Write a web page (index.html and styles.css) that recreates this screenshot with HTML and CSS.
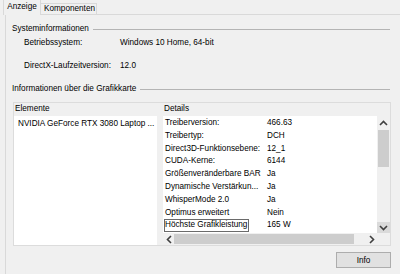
FILE: index.html
```html
<!DOCTYPE html>
<html>
<head>
    <meta name="viewport" content="width=device-width, initial-scale=1.0">
    <title>DirectX-Diagnoseprogramm - Anzeige</title>
    <link rel="stylesheet" href="styles.css">
</head>
<body>
    <!-- Tab strip -->
    <div class="tabs">
        <div class="tab active">Anzeige</div>
        <div class="tab">Komponenten</div>
    </div>

    <div class="page">
        <div class="section-title"><span>Systeminformationen</span><div class="rule"></div></div>

        <div class="info-row">
            <span class="key">Betriebssystem:</span>
            <span>Windows 10 Home, 64-bit</span>
        </div>
        <div class="info-row gap">
            <span class="key">DirectX-Laufzeitversion:</span>
            <span>12.0</span>
        </div>

        <div class="section-title gap"><span>Informationen über die Grafikkarte</span><div class="rule"></div></div>

        <!-- Elemente / Details -->
        <div class="frame">
            <div class="frame-head">
                <span class="head-el">Elemente</span>
                <span>Details</span>
            </div>
            <div class="frame-body">
                <div class="list">
                    <div class="list-item">NVIDIA GeForce RTX 3080 Laptop ...</div>
                </div>

                <div class="details">
                    <div class="details-main">
                        <div class="rows">
                            <div class="row"><span class="label">Treiberversion:</span><span>466.63</span></div>
                            <div class="row"><span class="label">Treibertyp:</span><span>DCH</span></div>
                            <div class="row"><span class="label">Direct3D-Funktionsebene:</span><span>12_1</span></div>
                            <div class="row"><span class="label">CUDA-Kerne:</span><span>6144</span></div>
                            <div class="row"><span class="label">Größenveränderbare BAR</span><span>Ja</span></div>
                            <div class="row"><span class="label">Dynamische Verstärkun...</span><span>Ja</span></div>
                            <div class="row"><span class="label">WhisperMode 2.0</span><span>Ja</span></div>
                            <div class="row"><span class="label">Optimus erweitert</span><span>Nein</span></div>
                            <div class="row"><span class="label focused"><span class="focus">Höchste Grafikleistung</span></span><span>165 W</span></div>
                        </div>
                        <div class="vscroll">
                            <div class="arrow">
                                <svg width="9" height="6" viewBox="0 0 9 6"><path d="M1 5 L4.5 1.5 L8 5" fill="none" stroke="#404040" stroke-width="1.6"/></svg>
                            </div>
                            <div class="vthumb"></div>
                            <div class="vtrack"></div>
                            <div class="arrow hot">
                                <svg width="9" height="6" viewBox="0 0 9 6"><path d="M1 1 L4.5 4.5 L8 1" fill="none" stroke="#404040" stroke-width="1.6"/></svg>
                            </div>
                        </div>
                    </div>
                    <div class="hscroll-row">
                        <div class="hscroll">
                            <div class="harrow">
                                <svg width="6" height="9" viewBox="0 0 6 9"><path d="M5 1 L1.5 4.5 L5 8" fill="none" stroke="#404040" stroke-width="1.6"/></svg>
                            </div>
                            <div class="hthumb"></div>
                            <div class="htrack"></div>
                            <div class="harrow">
                                <svg width="6" height="9" viewBox="0 0 6 9"><path d="M1 1 L4.5 4.5 L1 8" fill="none" stroke="#404040" stroke-width="1.6"/></svg>
                            </div>
                        </div>
                        <div class="corner"></div>
                    </div>
                </div>
            </div>
        </div>

        <div class="actions">
            <button class="btn">Info</button>
        </div>
    </div>
</body>
</html>
```

FILE: styles.css
```css
body {
    margin: 0;
    background-color: #f0f0f0;
    font-family: "Liberation Sans", Arial, sans-serif;
    font-size: 8.2px;
    color: #000;
    overflow: hidden;
}

/* Tabs */
.tabs {
    display: flex;
    align-items: flex-end;
    height: 14px;
    padding-left: 3px;
}

.tab {
    height: 10px;
    line-height: 10px;
    padding: 0 3px;
    width: 49px;
    border: 1px solid #d9d9d9;
    border-bottom: none;
    background-color: #f0f0f0;
    text-align: center;
}

.tab.active {
    position: relative;
    z-index: 1;
    width: 36px;
    padding: 0;
    height: 15px;
    line-height: 14px;
    margin-bottom: -1px;
    margin-right: -1px;
}

/* Tab page */
.page {
    margin-left: 5px;
    border-top: 1px solid #d9d9d9;
    border-left: 1px solid #d9d9d9;
    padding: 9px 0 0 6px;
    height: 250px;
}

.section-title {
    display: flex;
    align-items: center;
    height: 10px;
    line-height: 10px;
    width: 378px;
}

.section-title.gap {
    margin-top: 13px;
}

.rule {
    flex: 1;
    margin-left: 4px;
    border-top: 1px solid #b4b4b4;
}

.info-row {
    display: flex;
    height: 10px;
    line-height: 10px;
    margin-top: 4px;
    padding-left: 12px;
}

.info-row.gap {
    margin-top: 13px;
}

.key {
    width: 96px;
}

/* Elemente / Details frame */
.frame {
    margin-top: 8px;
    margin-left: 1px;
    width: 376px;
    border: 1px solid #dcdcdc;
    background-color: #f0f0f0;
}

.frame-head {
    display: flex;
    height: 13px;
    line-height: 11px;
}

.head-el {
    width: 149px;
    padding-left: 1px;
}

.frame-body {
    display: flex;
    gap: 6px;
    height: 129px;
}

.list {
    width: 143px;
    background-color: #fff;
}

.list-item {
    padding: 2px 0 0 4px;
    line-height: 12px;
    white-space: nowrap;
}

.details {
    flex: 1;
    display: flex;
    flex-direction: column;
}

.details-main {
    display: flex;
    height: 117px;
}

.rows {
    flex: 1;
    background-color: #fff;
    padding-top: 1px;
}

.row {
    display: flex;
    height: 12.8px;
    line-height: 12.8px;
    white-space: nowrap;
}

.label {
    width: 102px;
    padding-left: 2px;
}

.label.focused {
    padding-left: 1px;
    width: 103px;
}

.focus {
    border: 1px solid #6a6a6a;
    padding: 0 1px 0 0;
    line-height: 10.5px;
    display: inline-block;
}

/* Scrollbars */
.vscroll {
    width: 13px;
    display: flex;
    flex-direction: column;
    background-color: #f0f0f0;
}

.arrow {
    height: 14px;
    display: flex;
    align-items: center;
    justify-content: center;
}

.arrow.hot {
    height: 11px;
    background-color: #dadada;
}

.vthumb {
    height: 37px;
    margin: 0 1px;
    background-color: #cdcdcd;
}

.vtrack {
    flex: 1;
}

.hscroll-row {
    display: flex;
    height: 12px;
}

.hscroll {
    flex: 1;
    display: flex;
    background-color: #f0f0f0;
}

.harrow {
    width: 11px;
    display: flex;
    align-items: center;
    justify-content: center;
}

.hthumb {
    width: 180px;
    margin: 1px 0;
    background-color: #cdcdcd;
}

.htrack {
    flex: 1;
}

.corner {
    width: 13px;
    background-color: #f0f0f0;
}

/* Button row */
.actions {
    width: 379px;
    display: flex;
    justify-content: flex-end;
    margin-top: 6px;
}

.btn {
    width: 55px;
    height: 16px;
    padding: 0;
    font-family: "Liberation Sans", Arial, sans-serif;
    font-size: 8.2px;
    color: #000;
    background-color: #e1e1e1;
    border: 1px solid #adadad;
}
```
